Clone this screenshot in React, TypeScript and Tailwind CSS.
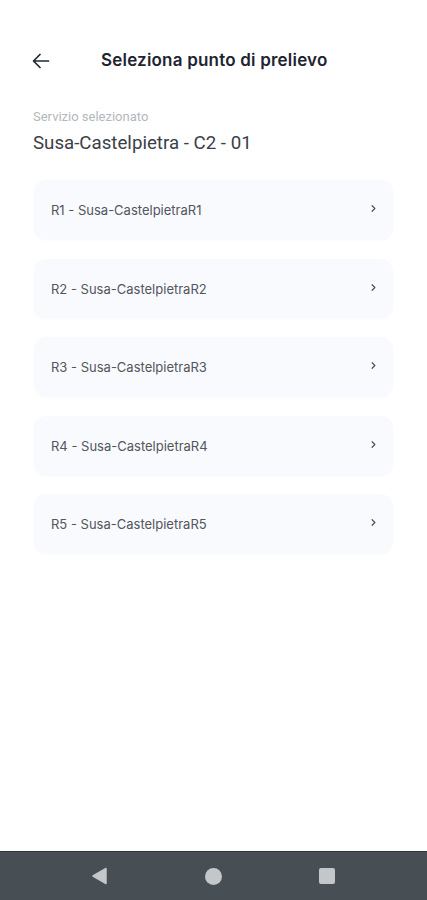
import { ChevronRight } from "lucide-react";

const points = [
  "R1 - Susa-CastelpietraR1",
  "R2 - Susa-CastelpietraR2",
  "R3 - Susa-CastelpietraR3",
  "R4 - Susa-CastelpietraR4",
  "R5 - Susa-CastelpietraR5",
];

export default function App() {
  return (
    <div className="flex h-[900px] w-full flex-col bg-white font-['Roboto',sans-serif]">
      {/* Main content */}
      <div className="flex-1">
        {/* Header */}
        <div className="mt-[41px] flex h-[40px] items-center px-[32px]">
          <svg width="18" height="18" viewBox="0 0 18 18" fill="none" stroke="#1f2937" strokeWidth="1.7" strokeLinecap="round" strokeLinejoin="round">
            <path d="M16.5 9H1.8M8 2.5L1.5 9L8 15.5" />
          </svg>
          <h1 className="ml-[51px] text-[17px] font-semibold tracking-[0.2px] text-[#1e2432] font-['Inter',sans-serif]">
            Seleziona punto di prelievo
          </h1>
        </div>

        {/* Selected service */}
        <div className="px-[33px]">
          <p className="mt-[28px] text-[13px] leading-[16px] text-[#b3b7bd]">Servizio selezionato</p>
          <p className="mt-[6px] text-[18.7px] leading-[24px] text-[#3b4048]">Susa-Castelpietra - C2 - 01</p>
        </div>

        {/* List */}
        <div className="mt-[25px] flex flex-col gap-[18.5px] px-[34px]">
          {points.map((p) => (
            <button
              key={p}
              className="flex h-[60px] w-full items-center justify-between rounded-[12px] bg-[#f9fafd] pl-[17px] pr-[14px] pt-[2px] text-left shadow-[0_1px_3px_rgba(0,0,0,0.015)]"
            >
              <span className="text-[13px] text-[#52565e] font-['Inter',sans-serif]">{p}</span>
              <ChevronRight size={11} strokeWidth={2.6} className="mb-[5px] text-[#4b5058]" />
            </button>
          ))}
        </div>
      </div>

      {/* Android nav bar */}
      <div className="flex h-[49px] items-center justify-between border-t border-[#2e3a38] bg-[#474e54] pl-[91px] pr-[92px]">
        <svg width="16" height="18" viewBox="0 0 16 18">
          <path d="M15 1.5V16.5L2 9Z" fill="#c3c7c9" stroke="#c3c7c9" strokeWidth="1.5" strokeLinejoin="round" />
        </svg>
        <div className="h-[17px] w-[17px] rounded-full bg-[#c3c7c9]" />
        <div className="h-[16px] w-[16px] rounded-[2px] bg-[#c3c7c9]" />
      </div>
    </div>
  );
}
